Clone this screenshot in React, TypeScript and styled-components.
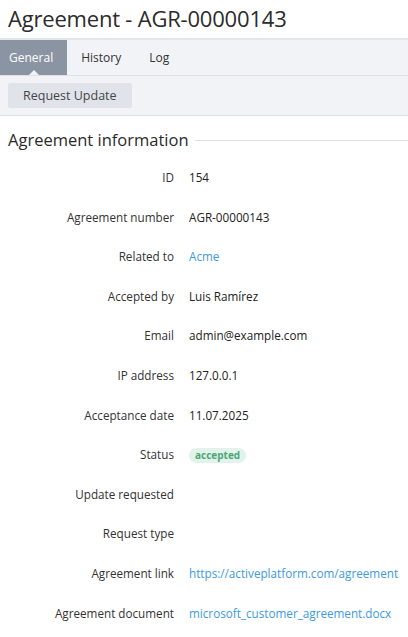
import React from 'react'
import styled, { createGlobalStyle } from 'styled-components'

const GlobalStyle = createGlobalStyle`
	body {
		margin: 0;
		background: #fff;
		font-family: 'Open Sans', 'Noto Sans', sans-serif;
		color: #222;
	}
`

const Page = styled.div`
	width: 408px;
	overflow: hidden;
`

const Title = styled.h1`
	margin: 0;
	padding: 3px 8px 0;
	height: 35px;
	font-size: 22px;
	font-weight: 400;
	line-height: 30px;
	color: #2b2b2b;
	letter-spacing: -0.2px;
	border-bottom: 2px solid #e3e6ea;
	box-sizing: content-box;
`

const TabBar = styled.div`
	display: flex;
	height: 35px;
	background: #f1f3f6;
	border-bottom: 1px solid #dde1e6;
`

const Tab = styled.div<{ $active?: boolean }>`
	position: relative;
	display: flex;
	align-items: center;
	padding: 0 14px 0 ${(p) => (p.$active ? '9px' : '14px')};
	font-size: 12px;
	color: ${(p) => (p.$active ? '#fff' : '#333')};
	background: ${(p) => (p.$active ? '#8b94a3' : 'transparent')};

	${(p) =>
		p.$active &&
		`
		&::after {
			content: '';
			position: absolute;
			left: 50%;
			bottom: 0;
			margin-left: -5px;
			border-left: 5px solid transparent;
			border-right: 5px solid transparent;
			border-bottom: 5px solid #f1f3f6;
		}
	`}
`

const Toolbar = styled.div`
	display: flex;
	align-items: center;
	height: 39px;
	padding: 0 8px;
	background: #f1f3f6;
	border-bottom: 1px solid #dde1e6;
`

const Button = styled.button`
	height: 25px;
	padding: 0 15px;
	border: none;
	border-radius: 2px;
	background: #e0e4ea;
	font-family: inherit;
	font-size: 12.5px;
	color: #444;
`

const Section = styled.section`
	padding: 10px 0 0 8px;
`

const SectionHeader = styled.div`
	display: flex;
	align-items: center;
	gap: 6px;
	font-size: 16.5px;
	color: #2b2b2b;
	height: 26px;
	margin-bottom: 16px;

	&::after {
		content: '';
		flex: 1;
		height: 1px;
		background: #dde1e6;
		margin-top: 2px;
	}
`

const Rows = styled.div`
	display: grid;
	grid-template-columns: 166px 1fr;
	grid-auto-rows: 39.6px;
	column-gap: 15px;
	font-size: 11.7px;
	line-height: 18px;
`

const Label = styled.div`
	text-align: right;
	color: #333;
	white-space: nowrap;
`

const Value = styled.div`
	color: #222;
	white-space: nowrap;
`

const Link = styled.a`
	color: #3c9ae3;
	text-decoration: none;
`

const Badge = styled.span`
	display: inline-block;
	padding: 0 6px;
	border-radius: 8px;
	background: #e1f3ea;
	color: #4da677;
	font-weight: 700;
	font-size: 10px;
	line-height: 15px;
`

const rows: { label: string; value?: React.ReactNode }[] = [
	{ label: 'ID', value: '154' },
	{ label: 'Agreement number', value: 'AGR-00000143' },
	{ label: 'Related to', value: <Link href="#">Acme</Link> },
	{ label: 'Accepted by', value: 'Luis Ramírez' },
	{ label: 'Email', value: 'admin@example.com' },
	{ label: 'IP address', value: '127.0.0.1' },
	{ label: 'Acceptance date', value: '11.07.2025' },
	{ label: 'Status', value: <Badge>accepted</Badge> },
	{ label: 'Update requested' },
	{ label: 'Request type' },
	{ label: 'Agreement link', value: <Link href="#">https://activeplatform.com/agreement</Link> },
	{ label: 'Agreement document', value: <Link href="#">microsoft_customer_agreement.docx</Link> },
]

export default function App() {
	return (
		<Page>
			<GlobalStyle />
			<Title>Agreement - AGR-00000143</Title>
			<TabBar>
				<Tab $active>General</Tab>
				<Tab>History</Tab>
				<Tab>Log</Tab>
			</TabBar>
			<Toolbar>
				<Button>Request Update</Button>
			</Toolbar>
			<Section>
				<SectionHeader>Agreement information</SectionHeader>
				<Rows>
					{rows.map((r) => (
						<React.Fragment key={r.label}>
							<Label>{r.label}</Label>
							<Value>{r.value}</Value>
						</React.Fragment>
					))}
				</Rows>
			</Section>
		</Page>
	)
}
